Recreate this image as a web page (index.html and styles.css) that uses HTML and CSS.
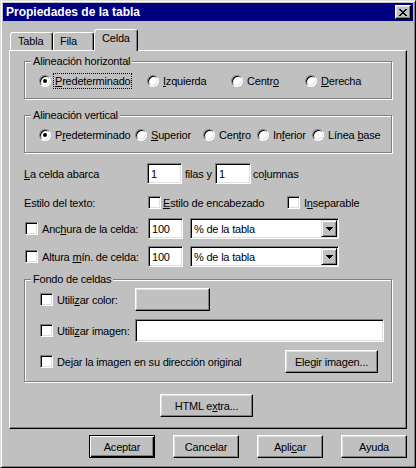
FILE: index.html
```html
<!DOCTYPE html>
<html lang="es">
<head>
<meta charset="utf-8">
<title>Propiedades de la tabla</title>
<link rel="stylesheet" href="styles.css">
</head>
<body>
<div class="window">
  <div class="titlebar">
    <span class="title">Propiedades de la tabla</span>
    <span class="close"><svg width="8" height="7" viewBox="0 0 8 7"><path fill="#000" d="M0 0h2v1H0zM6 0h2v1H6zM1 1h2v1H1zM5 1h2v1H5zM2 2h4v1H2zM3 3h2v1H3zM2 4h4v1H2zM1 5h2v1H1zM5 5h2v1H5zM0 6h2v1H0zM6 6h2v1H6z"/></svg></span>
  </div>

  <div class="tabs">
    <div class="tab tab-tabla">Tabla</div>
    <div class="tab tab-fila">Fila</div>
    <div class="tab tab-celda active">Celda</div>
  </div>

  <div class="panel">
    <div class="group g-align">
      <span class="legend">Alineación horizontal</span>
      <div class="radios">
        <div class="opt w108"><span class="radio on"></span><span class="lbl focus"><u>P</u>redeterminado</span></div>
        <div class="opt w84"><span class="radio"></span><span class="lbl"><u>I</u>zquierda</span></div>
        <div class="opt w74"><span class="radio"></span><span class="lbl">Centr<u>o</u></span></div>
        <div class="opt"><span class="radio"></span><span class="lbl"><u>D</u>erecha</span></div>
      </div>
    </div>

    <div class="group g-align g-second">
      <span class="legend">Alineación vertical</span>
      <div class="radios">
        <div class="opt w96"><span class="radio on"></span><span class="lbl">P<u>r</u>edeterminado</span></div>
        <div class="opt w68"><span class="radio"></span><span class="lbl"><u>S</u>uperior</span></div>
        <div class="opt w54"><span class="radio"></span><span class="lbl">Cen<u>t</u>ro</span></div>
        <div class="opt w55"><span class="radio"></span><span class="lbl">In<u>f</u>erior</span></div>
        <div class="opt"><span class="radio"></span><span class="lbl">Línea <u>b</u>ase</span></div>
      </div>
    </div>

    <div class="frow r1">
      <span class="flabel w123"><u>L</u>a celda abarca</span>
      <span class="field w35">1</span>
      <span class="mid">filas y</span>
      <span class="field w36">1</span>
      <span class="after">co<u>l</u>umnas</span>
    </div>

    <div class="frow r2">
      <span class="flabel w124">Estilo del texto:</span>
      <div class="copt w139"><span class="check tight"></span><span><u>E</u>stilo de encabezado</span></div>
      <div class="copt"><span class="check"></span><span>I<u>n</u>separable</span></div>
    </div>

    <div class="frow r3">
      <span class="check first"></span>
      <span class="flabel w106">Anc<u>h</u>ura de la celda:</span>
      <span class="field w35">100</span>
      <span class="field select"><span class="seltext">% de la tabla</span><span class="dd"><svg width="7" height="4" viewBox="0 0 7 4"><path fill="#000" d="M0 0h7v1H0zM1 1h5v1H1zM2 2h3v1H2zM3 3h1v1H3z"/></svg></span></span>
    </div>

    <div class="frow r4">
      <span class="check first"></span>
      <span class="flabel w106">Altura <u>m</u>ín. de celda:</span>
      <span class="field w35">100</span>
      <span class="field select"><span class="seltext">% de la tabla</span><span class="dd"><svg width="7" height="4" viewBox="0 0 7 4"><path fill="#000" d="M0 0h7v1H0zM1 1h5v1H1zM2 2h3v1H2zM3 3h1v1H3z"/></svg></span></span>
    </div>

    <div class="group g-bg">
      <span class="legend">Fondo de celdas</span>
      <div class="brow b1">
        <span class="check"></span>
        <span class="flabel w78">Utili<u>z</u>ar color:</span>
        <span class="btn colorbtn"></span>
      </div>
      <div class="brow b2">
        <span class="check"></span>
        <span class="flabel w78">Utili<u>z</u>ar imagen:</span>
        <span class="field imgfield"></span>
      </div>
      <div class="brow b2">
        <span class="check"></span>
        <span class="flabel">Dejar la imagen en su dirección original</span>
        <span class="btn wide push">Elegir imagen...</span>
      </div>
    </div>

    <div class="extra-row">
      <span class="btn wide">HTML e<u>x</u>tra...</span>
    </div>
  </div>

  <div class="buttons">
    <span class="btn dlg default">Aceptar</span>
    <span class="btn dlg">Cancelar</span>
    <span class="btn dlg">Apli<u>c</u>ar</span>
    <span class="btn dlg">Ayuda</span>
  </div>
</div>
</body>
</html>
```

FILE: styles.css
```css
* { box-sizing: border-box; }
html, body { margin: 0; padding: 0; }
body {
  background: #c0c0c0;
  font-family: "Liberation Sans", Arial, sans-serif;
  font-size: 11px;
  line-height: 14px;
  letter-spacing: -0.2px;
  color: #000;
}
u { text-decoration: underline; text-underline-offset: 1px; }

.window {
  width: 416px;
  height: 468px;
  background: #c0c0c0;
  border: 1px solid;
  border-color: #dfdfdf #000 #000 #dfdfdf;
  box-shadow: inset 1px 1px #fff, inset -1px -1px #808080;
  padding: 2px;
}

.titlebar {
  height: 18px;
  background: #000080;
  display: flex;
  align-items: center;
  justify-content: space-between;
  padding: 0 2px 0 3px;
}
.title { color: #fff; font-weight: bold; font-size: 12px; letter-spacing: 0; }
.close {
  width: 16px;
  height: 14px;
  background: #c0c0c0;
  border: 1px solid;
  border-color: #fff #000 #000 #fff;
  box-shadow: inset -1px -1px #808080, inset 1px 1px #dfdfdf;
  display: flex;
  align-items: center;
  justify-content: center;
  padding-right: 1px;
}
.close svg { display: block; }

.tabs {
  display: flex;
  align-items: flex-end;
  height: 21px;
  margin: 8px 0 0 7px;
}
.tab {
  height: 18px;
  background: #c0c0c0;
  border: 1px solid;
  border-bottom: none;
  border-color: #fff #000 transparent #fff;
  box-shadow: inset -1px 0 #808080;
  border-radius: 3px 3px 0 0;
  padding: 2px 0 0 7px;
  line-height: 13px;
}
.tab-tabla { width: 43px; }
.tab-fila { width: 41px; padding-left: 6px; }
.tab-celda { width: 44px; }
.tab.active {
  height: 22px;
  margin-bottom: -1px;
  position: relative;
  z-index: 1;
}

.panel {
  height: 379px;
  margin: 0 6px;
  border: 1px solid;
  border-color: #fff #000 #000 #fff;
  box-shadow: inset -1px -1px #808080;
  padding: 10px 14px 0 14px;
}

.group {
  border: 1px solid #808080;
  box-shadow: 1px 1px #fff, inset 1px 1px #fff;
}
.legend {
  display: table;
  margin: -7px 0 0 6px;
  padding: 0 2px;
  background: #c0c0c0;
  line-height: 13px;
}
.g-align { height: 38px; }
.g-second { margin-top: 16px; }

.radios {
  display: flex;
  align-items: center;
  height: 16px;
  margin-top: 5px;
  padding-left: 14px;
}
.opt { display: flex; align-items: center; flex: none; }
.w108 { width: 108px; }
.w84 { width: 84px; }
.w74 { width: 74px; }
.w96 { width: 96px; }
.w68 { width: 68px; }
.w54 { width: 54px; }
.w55 { width: 55px; }

.radio {
  width: 12px;
  height: 12px;
  flex: none;
  border-radius: 50%;
  background: #fff;
  border: 1px solid;
  border-color: #808080 #fff #fff #808080;
  box-shadow: inset 1px 1px #000, inset -1px -1px #dfdfdf;
  display: flex;
  align-items: center;
  justify-content: center;
  margin-right: 2px;
}
.radio.on::after {
  content: "";
  width: 4px;
  height: 4px;
  border-radius: 50%;
  background: #000;
}
.lbl {
  border: 1px solid transparent;
  padding: 0 1px;
  line-height: 14px;
}
.lbl.focus { border: 1px dotted #000; }

.check {
  width: 13px;
  height: 13px;
  flex: none;
  background: #fff;
  border: 1px solid;
  border-color: #808080 #fff #fff #808080;
  box-shadow: inset 1px 1px #000, inset -1px -1px #dfdfdf;
  margin-right: 4px;
}
.check.tight { margin-right: 2px; }
.check.first { margin-left: 1px; }

.frow {
  display: flex;
  align-items: center;
  height: 21px;
}
.r1 { margin-top: 10px; }
.r2 { margin-top: 8px; }
.r3 { margin-top: 5px; }
.r4 { margin-top: 7px; }

.flabel { flex: none; white-space: nowrap; }
.w123 { width: 123px; }
.w124 { width: 124px; }
.w106 { width: 106px; }
.w78 { width: 78px; }
.w139 { width: 139px; }
.w35 { width: 35px; }
.w36 { width: 36px; }

.copt { display: flex; align-items: center; flex: none; }

.field {
  height: 21px;
  flex: none;
  background: #fff;
  border: 1px solid;
  border-color: #808080 #fff #fff #808080;
  box-shadow: inset 1px 1px #000, inset -1px -1px #dfdfdf;
  display: flex;
  align-items: center;
  padding: 0 2px 0 3px;
}
.mid { width: 30px; margin-left: 3px; flex: none; }
.after { margin-left: 2px; }

.select {
  width: 149px;
  margin-left: 7px;
  padding: 0 0 0 3px;
}
.seltext { flex: 1; }
.dd {
  width: 16px;
  height: 17px;
  margin-right: 1px;
  background: #c0c0c0;
  border: 1px solid;
  border-color: #dfdfdf #000 #000 #dfdfdf;
  box-shadow: inset 1px 1px #fff, inset -1px -1px #808080;
  display: flex;
  align-items: center;
  justify-content: center;
}
.dd svg { display: block; }

.g-bg { height: 103px; margin-top: 12px; }
.brow {
  display: flex;
  align-items: center;
  height: 23px;
  padding-left: 15px;
}
.b1 { margin-top: 2px; }
.b2 { margin-top: 8px; }
.imgfield { width: 249px; height: 23px; }

.btn {
  height: 23px;
  flex: none;
  background: #c0c0c0;
  border: 1px solid;
  border-color: #fff #000 #000 #fff;
  box-shadow: inset -1px -1px #808080, inset 1px 1px #dfdfdf;
  display: flex;
  align-items: center;
  justify-content: center;
}
.colorbtn { width: 75px; }
.wide { width: 93px; }
.push { margin-left: auto; margin-right: 13px; }

.extra-row {
  display: flex;
  margin-top: 12px;
  padding-left: 136px;
}

.buttons {
  display: flex;
  justify-content: flex-end;
  gap: 18px;
  margin: 6px 6px 0 0;
}
.dlg { width: 66px; }
.default {
  border-color: #000;
  box-shadow: inset 1px 1px #fff, inset -1px -1px #000, inset -2px -2px #808080;
}
```
